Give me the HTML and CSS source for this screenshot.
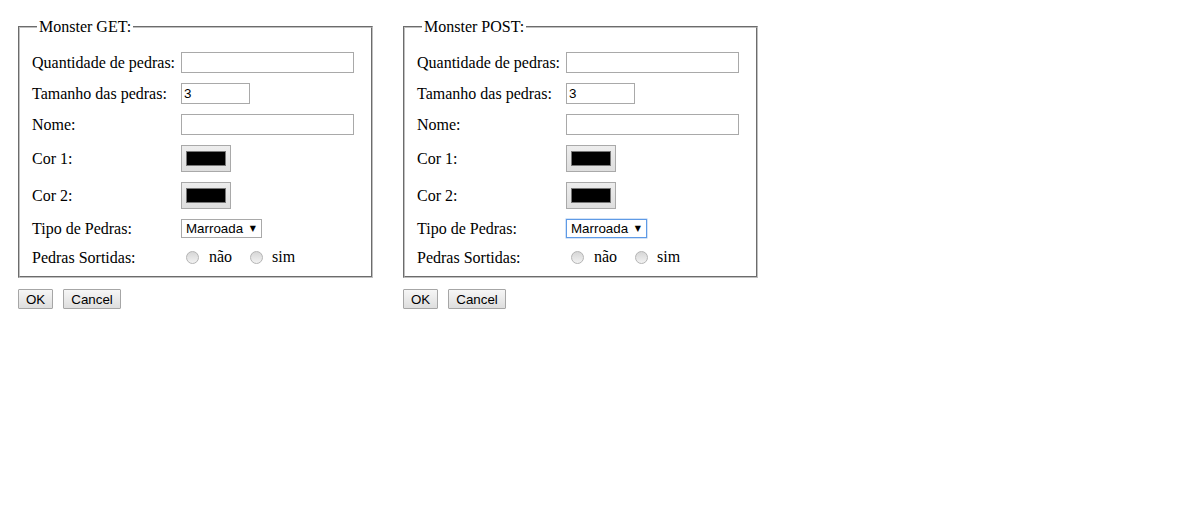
FILE: index.html
```html
<!DOCTYPE html>
<html lang="pt">
<head>
<meta charset="utf-8">
<title>Monster</title>
<link rel="stylesheet" href="styles.css">
</head>
<body>
<div class="forms">
  <form class="monster" method="get">
    <fieldset class="box">
      <legend class="title">Monster GET:</legend>
      <div class="grid">
        <label class="lbl">Quantidade de pedras:</label>
        <div class="ctl"><input class="txt wide" type="text"></div>
        <label class="lbl">Tamanho das pedras:</label>
        <div class="ctl"><input class="txt narrow" type="text" value="3"></div>
        <label class="lbl">Nome:</label>
        <div class="ctl"><input class="txt wide" type="text"></div>
        <label class="lbl">Cor 1:</label>
        <div class="ctl"><input class="color" type="color" value="#000000"></div>
        <label class="lbl">Cor 2:</label>
        <div class="ctl"><input class="color" type="color" value="#000000"></div>
        <label class="lbl">Tipo de Pedras:</label>
        <div class="ctl"><span class="sel-wrap"><select class="sel"><option>Marroada</option></select></span></div>
        <label class="lbl">Pedras Sortidas:</label>
        <div class="ctl radios">
          <input class="radio" type="radio" name="s1"><span class="rtext">não</span>
          <input class="radio second" type="radio" name="s1"><span class="rtext">sim</span>
        </div>
      </div>
    </fieldset>
    <div class="buttons">
      <button class="btn" type="button">OK</button>
      <button class="btn" type="button">Cancel</button>
    </div>
  </form>
  <form class="monster" method="post">
    <fieldset class="box">
      <legend class="title">Monster POST:</legend>
      <div class="grid">
        <label class="lbl">Quantidade de pedras:</label>
        <div class="ctl"><input class="txt wide" type="text"></div>
        <label class="lbl">Tamanho das pedras:</label>
        <div class="ctl"><input class="txt narrow" type="text" value="3"></div>
        <label class="lbl">Nome:</label>
        <div class="ctl"><input class="txt wide" type="text"></div>
        <label class="lbl">Cor 1:</label>
        <div class="ctl"><input class="color" type="color" value="#000000"></div>
        <label class="lbl">Cor 2:</label>
        <div class="ctl"><input class="color" type="color" value="#000000"></div>
        <label class="lbl">Tipo de Pedras:</label>
        <div class="ctl"><span class="sel-wrap"><select class="sel focused"><option>Marroada</option></select></span></div>
        <label class="lbl">Pedras Sortidas:</label>
        <div class="ctl radios">
          <input class="radio" type="radio" name="s2"><span class="rtext">não</span>
          <input class="radio second" type="radio" name="s2"><span class="rtext">sim</span>
        </div>
      </div>
    </fieldset>
    <div class="buttons">
      <button class="btn" type="button">OK</button>
      <button class="btn" type="button">Cancel</button>
    </div>
  </form>
</div>
</body>
</html>
```

FILE: styles.css
```css
html, body {
  background: #ffffff;
}
body {
  margin: 8px;
  font-family: "Liberation Serif", "Times New Roman", serif;
  font-size: 16px;
  color: #000;
}
.forms {
  display: flex;
  align-items: flex-start;
  gap: 30px;
  padding: 10px;
}
.monster {
  margin: 0;
  width: 355px;
}
.box {
  box-sizing: border-box;
  width: 355px;
  margin: 0;
  padding: 16px 12px 10px 12px;
  border: 2px groove #c0c0c0;
  min-width: 0;
}
.title {
  padding: 0 2px;
  margin-left: 5px;
  font-size: 16px;
  line-height: 18px;
}
.grid {
  display: grid;
  grid-template-columns: 149px 1fr;
  grid-template-rows: 21px 21px 21px 27px 27px 19px 18px;
  row-gap: 10px;
}
.lbl {
  display: flex;
  align-items: center;
  white-space: nowrap;
  line-height: 18px;
  padding-top: 1px;
}
.ctl {
  display: flex;
  align-items: center;
}
.txt {
  box-sizing: border-box;
  height: 21px;
  margin: 0;
  padding: 1px 2px;
  border: 1px solid #a9a9a9;
  font-family: "Liberation Sans", Arial, sans-serif;
  font-size: 13.33px;
  color: #000;
  background: #fff;
  outline: none;
}
.wide { width: 173px; }
.narrow { width: 69px; }
.color {
  -webkit-appearance: none;
  appearance: none;
  box-sizing: border-box;
  width: 50px;
  height: 27px;
  margin: 0;
  padding: 5px 4px;
  border: 1px solid #a9a9a9;
  background: linear-gradient(#ededed, #dedede);
  cursor: default;
}
.color::-webkit-color-swatch-wrapper {
  padding: 0;
}
.color::-webkit-color-swatch {
  border: 1px solid #777;
}
.sel-wrap {
  position: relative;
  display: inline-block;
}
.sel-wrap::after {
  content: "▼";
  position: absolute;
  right: 6px;
  top: 4px;
  font-family: "DejaVu Sans", sans-serif;
  font-size: 8px;
  line-height: 11px;
  color: #000;
  pointer-events: none;
}
.sel {
  -webkit-appearance: none;
  appearance: none;
  box-sizing: border-box;
  width: 81px;
  height: 19px;
  margin: 0;
  padding: 0 0 0 4px;
  border: 1px solid #a9a9a9;
  border-radius: 0;
  background: #fff;
  font-family: "Liberation Sans", Arial, sans-serif;
  font-size: 13.33px;
  line-height: 17px;
  color: #000;
  outline: none;
}
.sel.focused {
  border-color: #5e9ae6;
  box-shadow: 0 0 0 0.5px #a8c8f0;
}
.radios {
  line-height: 18px;
}
.radio {
  -webkit-appearance: none;
  appearance: none;
  box-sizing: border-box;
  width: 13px;
  height: 13px;
  margin: 0 10px 0 5px;
  border: 1px solid #b4b4b4;
  border-radius: 50%;
  background: linear-gradient(#d6d6d6, #f2f2f2);
}
.radio.second {
  margin-left: 18px;
  margin-right: 9px;
}
.rtext {
  white-space: nowrap;
}
.buttons {
  display: flex;
  gap: 10px;
  margin-top: 11px;
}
.btn {
  box-sizing: border-box;
  height: 20px;
  margin: 0;
  padding: 0 7px;
  border: 1px solid #a6a6a6;
  border-radius: 1px;
  background: linear-gradient(#f6f6f6, #dedede);
  font-family: "Liberation Sans", Arial, sans-serif;
  font-size: 13.33px;
  color: #000;
}
```
